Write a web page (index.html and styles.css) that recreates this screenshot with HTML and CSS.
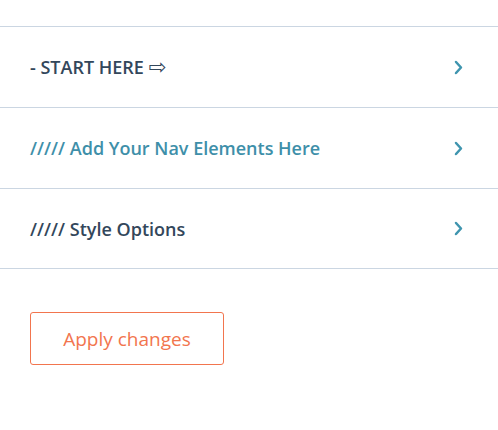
FILE: index.html
```html
<!DOCTYPE html>
<html>
<head>
<meta charset="utf-8">
<link rel="stylesheet" href="styles.css">
</head>
<body>
<ul class="nav">
  <li class="item"><span class="label">- START HERE <span class="arrow">⇨</span></span><svg class="chev" viewBox="0 0 9 15" width="9" height="15"><path d="M2 2 L7 7.5 L2 13" fill="none" stroke="#3f95af" stroke-width="2.5" stroke-linecap="round" stroke-linejoin="round"/></svg></li>
  <li class="item"><span class="label teal">///// Add Your Nav Elements Here</span><svg class="chev" viewBox="0 0 9 15" width="9" height="15"><path d="M2 2 L7 7.5 L2 13" fill="none" stroke="#3f95af" stroke-width="2.5" stroke-linecap="round" stroke-linejoin="round"/></svg></li>
  <li class="item"><span class="label">///// Style Options</span><svg class="chev" viewBox="0 0 9 15" width="9" height="15"><path d="M2 2 L7 7.5 L2 13" fill="none" stroke="#3f95af" stroke-width="2.5" stroke-linecap="round" stroke-linejoin="round"/></svg></li>
</ul>
<div class="actions">
  <button class="apply">Apply changes</button>
</div>
</body>
</html>
```
FILE: styles.css
```css
html, body {
  margin: 0;
  padding: 0;
  background: #ffffff;
}
body {
  font-family: "Open Sans", Lato, sans-serif;
  color: #33475b;
}
.nav {
  list-style: none;
  margin: 26px 0 0 0;
  padding: 0;
  border-top: 1px solid #cbd6e2;
}
.item {
  height: 80px;
  border-bottom: 1px solid #cbd6e2;
  display: flex;
  align-items: center;
  justify-content: space-between;
  padding: 0 35px 0 30px;
}
.item:last-child {
  height: 79px;
}
.label {
  font-size: 18px;
  font-weight: 600;
  color: #33475b;
}
.label.teal {
  color: #3e8fa9;
}
.arrow {
  font-family: "DejaVu Sans", sans-serif;
  font-weight: 400;
  font-size: 21px;
  line-height: 1;
}
.chev {
  display: block;
}
.actions {
  padding: 43px 0 0 30px;
}
.apply {
  width: 194px;
  height: 53px;
  border: 1px solid #f2754e;
  border-radius: 3px;
  background: #ffffff;
  color: #f2754e;
  font-family: "Open Sans", Lato, sans-serif;
  font-size: 19px;
  font-weight: 500;
  cursor: pointer;
}
```
